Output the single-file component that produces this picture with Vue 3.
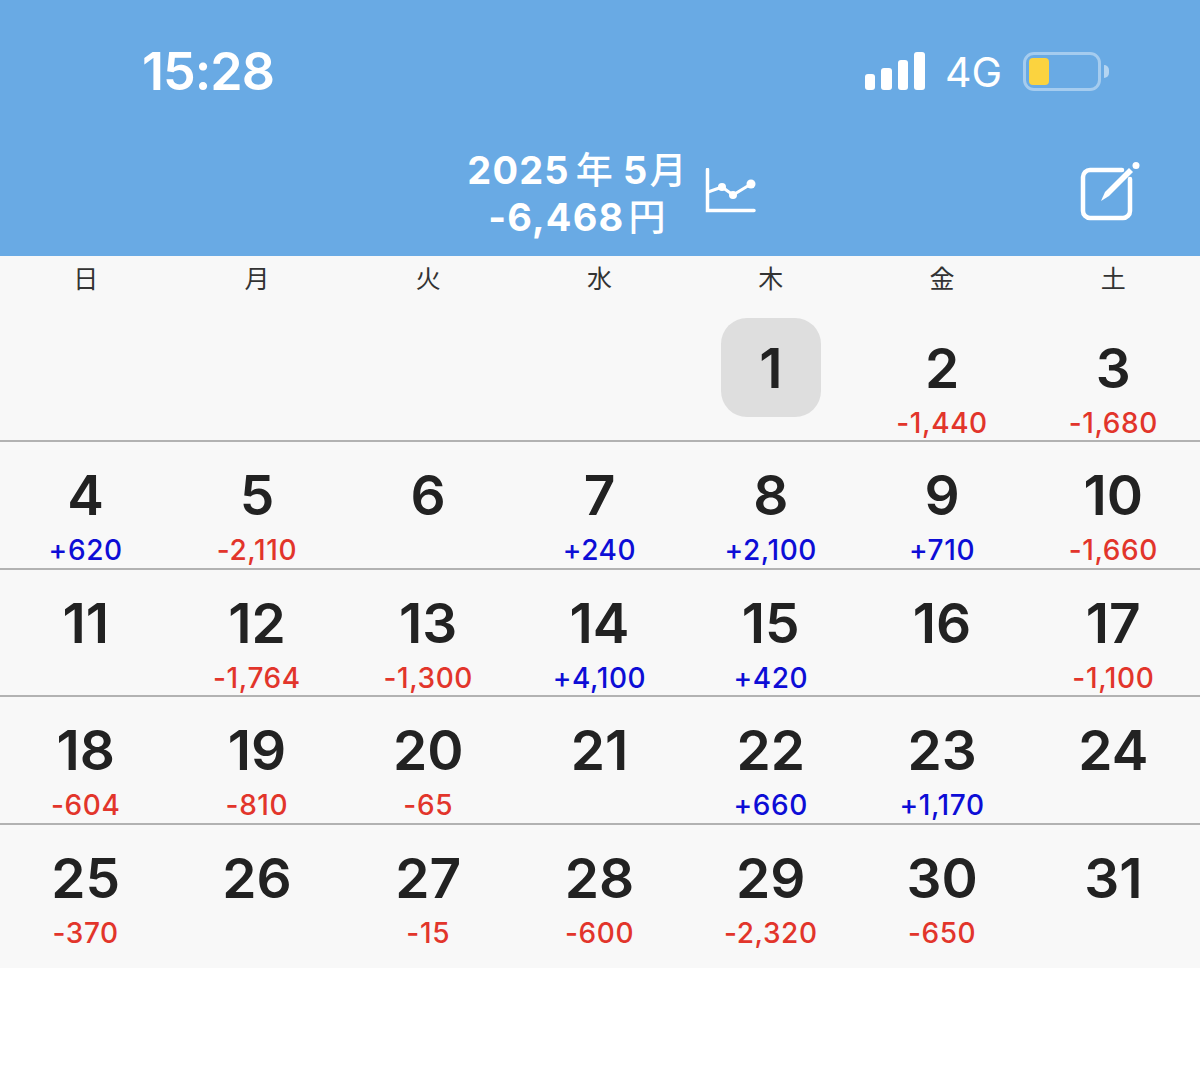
<template>
  <div class="page">
    <header class="head">
      <div class="status">
        <span class="time">15:28</span>
        <div class="status-right">
          <div class="signal">
            <i v-for="h in [16, 22, 30, 38]" :key="h" :style="{ height: h + 'px' }"></i>
          </div>
          <span class="net">4G</span>
          <div class="battery">
            <div class="battery-body"><div class="battery-fill"></div></div>
            <div class="battery-cap"></div>
          </div>
        </div>
      </div>
      <div class="nav">
        <div class="title-group">
          <div class="title">
            <div class="title-line">2025<span class="cjk">年</span>5<span class="cjk tight">月</span></div>
            <div class="title-line">-6,468<span class="cjk yen">円</span></div>
          </div>
          <svg class="chart" width="52" height="46" viewBox="0 0 52 46" fill="none" stroke="#fff" stroke-width="3.5">
            <path d="M2.5 1.5V42.5H49" stroke-linecap="round" />
            <path d="M3 24L17 19L28 27L46 16" stroke-width="3" />
            <circle cx="17" cy="19" r="4" fill="#fff" stroke="none" />
            <circle cx="28" cy="27" r="4" fill="#fff" stroke="none" />
            <circle cx="46" cy="16" r="4.5" fill="#fff" stroke="none" />
          </svg>
        </div>
        <svg class="edit" width="62" height="62" viewBox="0 0 62 62" fill="none">
          <path d="M43 8H11A7 7 0 0 0 4 15V49A7 7 0 0 0 11 56H44A7 7 0 0 0 51 49V17" stroke="#fff" stroke-width="4.5" stroke-linecap="round" />
          <path d="M22 39L26 30L50 6L54 10L30 34Z" fill="#fff" />
          <circle cx="57" cy="3.5" r="3.5" fill="#fff" />
        </svg>
      </div>
    </header>

    <div class="calendar">
      <div class="weekdays">
        <span v-for="w in weekdays" :key="w">{{ w }}</span>
      </div>
      <div v-for="(week, i) in weeks" :key="i" class="week">
        <div v-for="(c, j) in week" :key="j" class="cell">
          <template v-if="c">
            <div class="day" :class="{ today: c.d === 1 }">{{ c.d }}</div>
            <div class="amount" :class="amountClass(c.v)">{{ c.v }}</div>
          </template>
        </div>
      </div>
    </div>
  </div>
</template>

<script setup>
const weekdays = ["日", "月", "火", "水", "木", "金", "土"];

const weeks = [
  [null, null, null, null, { d: 1 }, { d: 2, v: "-1,440" }, { d: 3, v: "-1,680" }],
  [{ d: 4, v: "+620" }, { d: 5, v: "-2,110" }, { d: 6 }, { d: 7, v: "+240" }, { d: 8, v: "+2,100" }, { d: 9, v: "+710" }, { d: 10, v: "-1,660" }],
  [{ d: 11 }, { d: 12, v: "-1,764" }, { d: 13, v: "-1,300" }, { d: 14, v: "+4,100" }, { d: 15, v: "+420" }, { d: 16 }, { d: 17, v: "-1,100" }],
  [{ d: 18, v: "-604" }, { d: 19, v: "-810" }, { d: 20, v: "-65" }, { d: 21 }, { d: 22, v: "+660" }, { d: 23, v: "+1,170" }, { d: 24 }],
  [{ d: 25, v: "-370" }, { d: 26 }, { d: 27, v: "-15" }, { d: 28, v: "-600" }, { d: 29, v: "-2,320" }, { d: 30, v: "-650" }, { d: 31 }],
];

function amountClass(v) {
  if (!v) return "";
  return v[0] === "+" ? "plus" : "minus";
}
</script>

<style>
html, body { background: #fff; }
</style>

<style scoped>
.page {
  min-height: 1087px;
  background: #fff;
  font-family: Inter, "Noto Sans CJK JP", sans-serif;
  color: #222;
}

.head { background: #69aae4; height: 256px; color: #fff; position: relative; }

/* status bar */
.status { height: 143px; display: flex; justify-content: space-between; align-items: center; padding: 0 91px 0 142px; }
.time { font-size: 52px; font-weight: 600; letter-spacing: -1px; }
.status-right { display: flex; align-items: center; }
.signal { display: flex; align-items: flex-end; gap: 6px; margin-top: -2px; }
.signal i { display: block; width: 10.5px; background: #fff; border-radius: 3px; }
.net { font-size: 41px; font-weight: 400; margin-left: 20px; }
.battery { display: flex; align-items: center; margin-left: 21px; }
.battery-body {
  width: 78px; height: 39px; box-sizing: border-box; padding: 3px;
  border: 3px solid rgba(255, 255, 255, 0.4); border-radius: 11px;
}
.battery-fill { width: 20px; height: 100%; background: #fbd33f; border-radius: 4px; }
.battery-cap { width: 5px; height: 13px; margin-left: 3px; background: rgba(255, 255, 255, 0.5); border-radius: 0 6px 6px 0; }

/* nav */
.nav { position: relative; display: flex; justify-content: center; padding-left: 24px; }
.title-group { display: flex; align-items: flex-start; gap: 17px; }
.title { text-align: center; font-size: 38px; font-weight: 700; line-height: 47px; letter-spacing: 1.2px; margin-top: 4px; }
.title-line { white-space: nowrap; }
.cjk { font-weight: 500; margin: 0 9px 0 6px; font-size: 37px; }
.cjk.tight { margin: 0 0 0 1px; }
.cjk.yen { margin: 0 0 0 4px; }
.chart { margin-top: 25px; }
.edit { position: absolute; left: 1079px; top: 19px; }

/* calendar */
.calendar { background: #f8f8f8; }
.weekdays { display: grid; grid-template-columns: repeat(7, 1fr); height: 59px; padding: 7px 1px 0 0; box-sizing: border-box; text-align: center; font-size: 25px; line-height: 32px; color: #333; font-weight: 400; }
.week { display: grid; grid-template-columns: repeat(7, 1fr); height: 127.4px; padding-right: 1px; box-sizing: border-box; border-bottom: 2px solid #b2b2b2; }
.week:last-child { border-bottom: none; height: 143px; }
.cell { display: flex; flex-direction: column; align-items: center; padding-top: 3px; }
.day { width: 100px; height: 99px; box-sizing: border-box; padding-top: 1px; margin-bottom: 1px; display: flex; align-items: center; justify-content: center; font-size: 55px; font-weight: 600; border-radius: 26px; color: #222; }
.day.today { background: #dedede; }
.amount { font-size: 28px; line-height: 34px; margin-top: -12px; font-weight: 500; letter-spacing: 0.6px; }
.plus { color: #0d0dd6; }
.minus { color: #e2352b; }
</style>
